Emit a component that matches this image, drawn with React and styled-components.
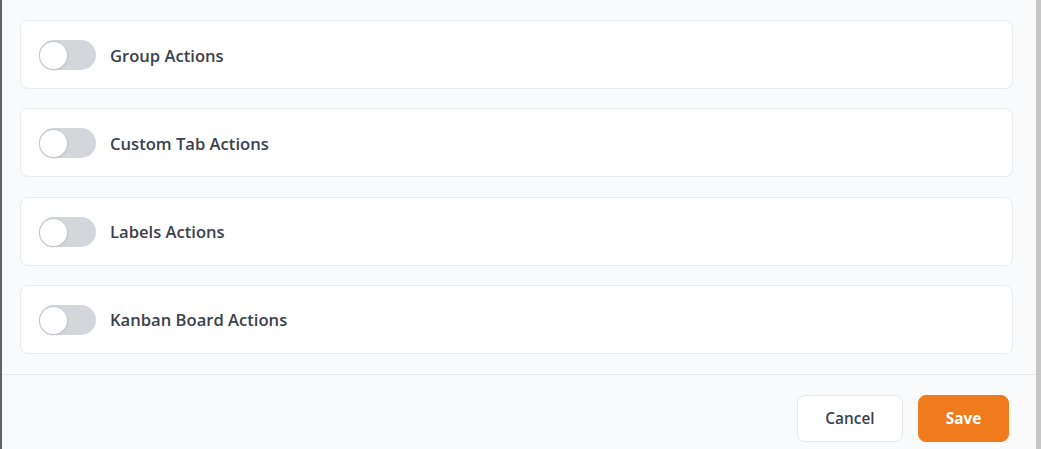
import React from "react";
import styled, { createGlobalStyle } from "styled-components";

const Global = createGlobalStyle`
  html, body { margin: 0; padding: 0; }
  body { font-family: "Open Sans", "Noto Sans", sans-serif; background: #c6c6c6; }
  * { box-sizing: border-box; }
`;

const Frame = styled.div`
  display: flex;
  width: 1041px;
  height: 449px;
  overflow: hidden;
`;

const LeftEdge = styled.div`
  width: 2px;
  background: #5f6368;
  flex: none;
`;

const Scrollbar = styled.div`
  width: 5px;
  background: #c6c6c6;
  flex: none;
`;

const Panel = styled.div`
  flex: 1;
  display: flex;
  flex-direction: column;
  background: #f9fafb;
`;

const Body = styled.div`
  display: flex;
  flex-direction: column;
  gap: 19.3px;
  padding: 20px 23px 20px 18px;
`;

const Card = styled.div`
  height: 69px;
  display: flex;
  align-items: center;
  gap: 14px;
  padding: 1px 18px 0;
  background: #ffffff;
  border: 1px solid #e8eaee;
  border-radius: 8px;
`;

const Track = styled.button`
  position: relative;
  width: 57px;
  height: 30px;
  padding: 0;
  border: none;
  border-radius: 15px;
  background: ${(p) => (p.$on ? "#ef7b1d" : "#d3d6db")};
  cursor: pointer;
  flex: none;
`;

const Knob = styled.span`
  position: absolute;
  top: 2px;
  left: ${(p) => (p.$on ? "29px" : "1px")};
  width: 27px;
  height: 27px;
  border-radius: 50%;
  background: #ffffff;
  box-shadow: 0 0 0 1px #c4c7cc, 0 1px 2px rgba(0, 0, 0, 0.2);
`;

const Label = styled.span`
  font-size: 16.6px;
  font-weight: 600;
  color: #3a414c;
`;

const Footer = styled.div`
  flex: 1;
  display: flex;
  justify-content: flex-end;
  align-items: flex-start;
  gap: 15px;
  padding: 20px 27px 0 0;
  border-top: 1px solid #e5e7eb;
`;

const Button = styled.button`
  height: 47px;
  padding: 0;
  width: ${(p) => p.$w}px;
  border-radius: 8px;
  font-family: "Open Sans", "Noto Sans", sans-serif;
  font-size: 15.4px;
  font-weight: ${(p) => (p.$primary ? 700 : 600)};
  color: ${(p) => (p.$primary ? "#ffffff" : "#3a414c")};
  background: ${(p) => (p.$primary ? "#ef7b1d" : "#ffffff")};
  border: 1px solid ${(p) => (p.$primary ? "#ef7b1d" : "#e5e7eb")};
  cursor: pointer;
`;

const items = ["Group Actions", "Custom Tab Actions", "Labels Actions", "Kanban Board Actions"];

export default function App() {
  const [state, setState] = React.useState(items.map(() => false));
  return (
    <>
      <Global />
      <Frame>
        <LeftEdge />
        <Panel>
          <Body>
            {items.map((label, i) => (
              <Card key={label}>
                <Track
                  $on={state[i]}
                  onClick={() => setState((s) => s.map((v, j) => (j === i ? !v : v)))}
                  aria-label={label}
                >
                  <Knob $on={state[i]} />
                </Track>
                <Label>{label}</Label>
              </Card>
            ))}
          </Body>
          <Footer>
            <Button $w={106}>Cancel</Button>
            <Button $w={91} $primary>Save</Button>
          </Footer>
        </Panel>
        <Scrollbar />
      </Frame>
    </>
  );
}
